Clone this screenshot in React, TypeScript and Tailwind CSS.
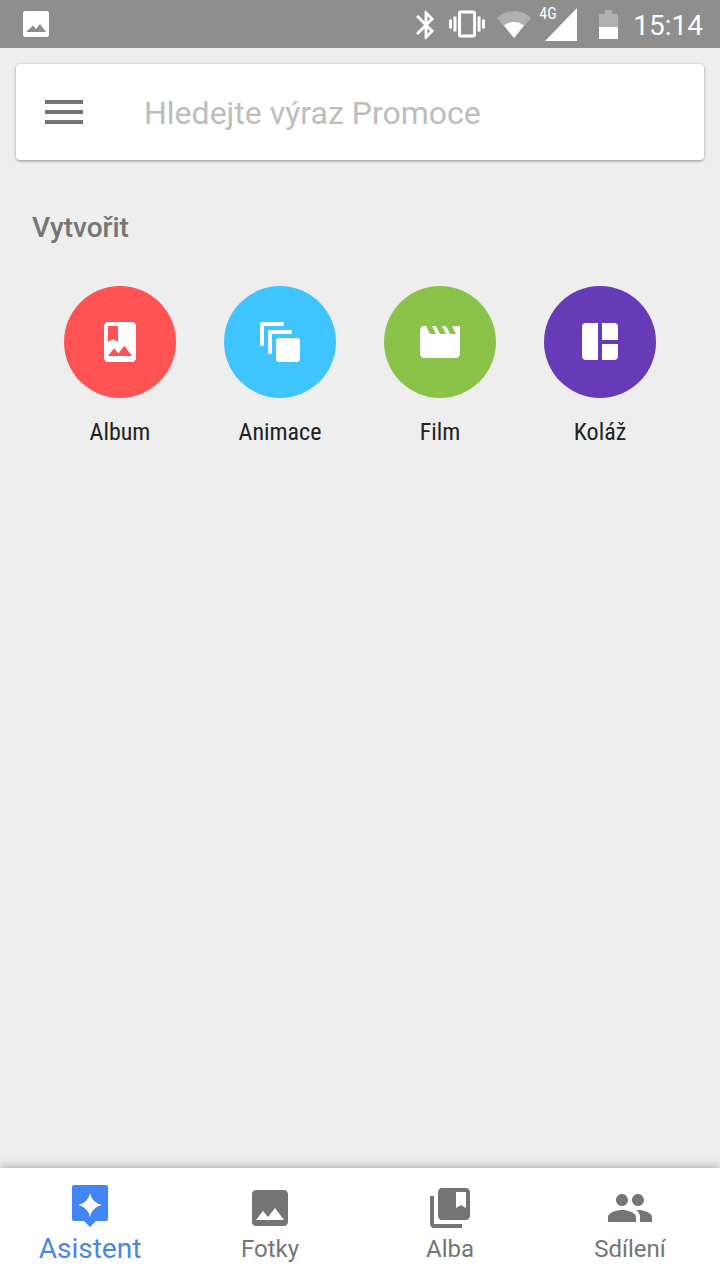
const roboto = "font-['Roboto',sans-serif]";

// Status bar glyphs
function StatusBar() {
  return (
    <div className="flex h-12 shrink-0 items-center bg-[#8e8e8e] pl-[23px] pr-[17px] text-white">
      <svg width="26" height="26" viewBox="0 0 26 26" className="shrink-0">
        <path
          fill="#fff"
          fillRule="evenodd"
          d="M2 0h22a2 2 0 0 1 2 2v22a2 2 0 0 1-2 2H2a2 2 0 0 1-2-2V2a2 2 0 0 1 2-2zM3 21h20l-6-8-4 5-3-3.500z"
        />
      </svg>
      <div className="ml-auto flex items-center">
        <svg width="34" height="34" viewBox="0 0 24 24" fill="#fff" className="mt-[1px]">
          <path d="M17.71 7.71L12 2h-1v7.59L6.41 5 5 6.41 10.59 12 5 17.59 6.41 19 11 14.41V22h1l5.71-5.71-4.3-4.29 4.3-4.29zM13 5.83l1.88 1.88L13 9.59V5.83zm1.88 10.46L13 18.170v-3.760l1.88 1.88z" />
        </svg>
        <svg width="36" height="36" viewBox="0 0 24 24" fill="#fff" className="ml-[6px]">
          <path d="M0 15h2V9H0v6zm3 2h2V7H3v10zm19-8v6h2V9h-2zm-3 8h2V7h-2v10zM16.500 3h-9C6.670 3 6 3.670 6 4.500v15c0 .83.67 1.500 1.500 1.500h9c.83 0 1.500-.67 1.500-1.500v-15c0-.83-.67-1.500-1.500-1.500zM16 19H8V5h8v14z" />
        </svg>
        <svg width="34" height="28" viewBox="0 0 34 28" className="ml-3">
          <path fill="#fff" fillOpacity="0.3" d="M0 8C5 3 11 1 17 1s12 2 17 7L17 28z" />
          <path fill="#fff" d="M7 15.500C10 13 13.500 12 17 12s7 1 10 3.500L17 28z" />
        </svg>
        <div className="relative ml-2 h-8 w-[38px]">
          <svg width="32" height="33" viewBox="0 0 32 33" className="absolute right-0 top-0">
            <path fill="#fff" d="M0 33L32 0v33z" />
          </svg>
          <span className={`absolute left-0 top-0 ${roboto} font-stretch-condensed text-[16px] leading-[12px] text-white`}>4G</span>
        </div>
        <svg width="19" height="29" viewBox="0 0 19 29" className="ml-[22px]">
          <path fill="#fff" fillOpacity="0.3" d="M6 0h7v4h6v13H0V4h6z" />
          <path fill="#fff" d="M0 17h19v12H0z" />
        </svg>
        <span className={`ml-[15px] mt-[3px] ${roboto} text-[28px] leading-none text-white`}>15:14</span>
      </div>
    </div>
  );
}

function SearchBar() {
  return (
    <div className="mx-4 mt-4 flex h-24 items-center rounded bg-white pl-[29px] shadow-[0_1px_3px_rgba(0,0,0,0.4)]">
      <div className="flex w-[38px] flex-col gap-[6px]">
        <div className="h-1 bg-[#757575]" />
        <div className="h-1 bg-[#757575]" />
        <div className="h-1 bg-[#757575]" />
      </div>
      <span className={`ml-[61px] mt-[2px] ${roboto} text-[32px] text-[#bdbdbd]`}>Hledejte výraz Promoce</span>
    </div>
  );
}

const createItems = [
  {
    label: "Album",
    color: "bg-[#ff5252]",
    icon: (
      <svg width="48" height="48" viewBox="0 0 24 24" fill="#fff">
        <path d="M18 2H6c-1.100 0-2 .9-2 2v16c0 1.100.9 2 2 2h12c1.100 0 2-.9 2-2V4c0-1.100-.9-2-2-2zM6 4h5v8l-2.500-1.500L6 12V4zm0 15l3-3.860 2.140 2.580 3-3.860L18 19H6z" />
      </svg>
    ),
  },
  {
    label: "Animace",
    color: "bg-[#40c4ff]",
    icon: (
      <svg width="48" height="48" viewBox="0 0 48 48" fill="#fff">
        <path d="M4 5.500A1.500 1.500 0 0 1 5.500 4H28v4H8v20H4z" />
        <path d="M12 13.500A1.500 1.500 0 0 1 13.500 12H36v4H16v20h-4z" />
        <rect x="20" y="20" width="24" height="24" rx="3" />
      </svg>
    ),
  },
  {
    label: "Film",
    color: "bg-[#8bc34a]",
    icon: (
      <svg width="48" height="48" viewBox="0 0 24 24" fill="#fff">
        <path d="M18 4l2 4h-3l-2-4h-2l2 4h-3l-2-4H8l2 4H7L5 4H4c-1.100 0-1.990.9-1.990 2L2 18c0 1.100.9 2 2 2h16c1.100 0 2-.9 2-2V4h-4z" />
      </svg>
    ),
  },
  {
    label: "Koláž",
    color: "bg-[#673ab7]",
    icon: (
      <svg width="48" height="48" viewBox="0 0 48 48" fill="#fff">
        <path d="M10 5h12v37H10a4 4 0 0 1-4-4V9a4 4 0 0 1 4-4z" />
        <path d="M26 5h12a4 4 0 0 1 4 4v13H26z" />
        <path d="M26 26h16v12a4 4 0 0 1-4 4H26z" />
      </svg>
    ),
  },
];

function CreateSection() {
  return (
    <div className="mt-[50px]">
      <h2 className={`pl-8 ${roboto} text-[28px] font-medium leading-9 text-[#757575]`}>Vytvořit</h2>
      <div className="mt-10 grid grid-cols-4 px-10">
        {createItems.map((item) => (
          <div key={item.label} className="flex flex-col items-center">
            <div className={`flex h-28 w-28 items-center justify-center rounded-full ${item.color}`}>{item.icon}</div>
            <span className={`mt-[18px] ${roboto} font-stretch-condensed text-[24px] leading-8 text-[#212121]`}>{item.label}</span>
          </div>
        ))}
      </div>
    </div>
  );
}

const navItems = [
  {
    label: "Asistent",
    active: true,
    icon: (
      <svg width="48" height="48" viewBox="0 0 48 48">
        <path
          fill="#4285f4"
          d="M8 1h32a2 2 0 0 1 2 2v32a2 2 0 0 1-2 2h-10l-6 6-6-6H8a2 2 0 0 1-2-2V3a2 2 0 0 1 2-2z"
        />
        <path fill="#fff" d="M24 9c1.500 6.500 5.500 10.500 12 12-6.500 1.500-10.500 5.500-12 12-1.500-6.500-5.500-10.500-12-12 6.500-1.500 10.500-5.500 12-12z" />
      </svg>
    ),
  },
  {
    label: "Fotky",
    active: false,
    icon: (
      <svg width="48" height="48" viewBox="0 0 24 24" fill="#757575">
        <path d="M21 19V5c0-1.100-.9-2-2-2H5c-1.100 0-2 .9-2 2v14c0 1.100.9 2 2 2h14c1.100 0 2-.9 2-2zM8.500 13.500l2.500 3.010L14.500 12l4.500 6H5l3.500-4.500z" />
      </svg>
    ),
  },
  {
    label: "Alba",
    active: false,
    icon: (
      <svg width="48" height="48" viewBox="0 0 24 24" fill="#757575">
        <path d="M4 6H2v14c0 1.100.9 2 2 2h14v-2H4V6zm16-4H8c-1.100 0-2 .9-2 2v12c0 1.100.9 2 2 2h12c1.100 0 2-.9 2-2V4c0-1.100-.9-2-2-2zm0 10l-2.500-1.500L15 12V4h5v8z" />
      </svg>
    ),
  },
  {
    label: "Sdílení",
    active: false,
    icon: (
      <svg width="48" height="48" viewBox="0 0 24 24" fill="#757575">
        <path d="M16 11c1.660 0 2.990-1.340 2.990-3S17.660 5 16 5c-1.660 0-3 1.340-3 3s1.340 3 3 3zm-8 0c1.660 0 2.990-1.340 2.990-3S9.660 5 8 5C6.340 5 5 6.340 5 8s1.340 3 3 3zm0 2c-2.330 0-7 1.170-7 3.500V19h14v-2.500c0-2.330-4.670-3.500-7-3.500zm8 0c-.29 0-.62.02-.97.05 1.160.84 1.970 1.970 1.970 3.450V19h6v-2.500c0-2.330-4.670-3.500-7-3.500z" />
      </svg>
    ),
  },
];

function BottomNav() {
  return (
    <div className="grid h-28 shrink-0 grid-cols-4 bg-white pt-4 shadow-[0_-2px_8px_rgba(0,0,0,0.25)]">
      {navItems.map((item) => (
        <div key={item.label} className="flex flex-col items-center">
          {item.icon}
          <span
            className={`${roboto} mt-[1px] h-8 leading-8 ${
              item.active ? "text-[28px] text-[#4a86e8]" : "text-[24px] text-[#757575]"
            }`}
          >
            {item.label}
          </span>
        </div>
      ))}
    </div>
  );
}

export default function App() {
  return (
    <div className="flex h-[1280px] w-[720px] flex-col overflow-hidden bg-[#eeeeee]">
      <StatusBar />
      <div className="flex-1">
        <SearchBar />
        <CreateSection />
      </div>
      <BottomNav />
    </div>
  );
}
